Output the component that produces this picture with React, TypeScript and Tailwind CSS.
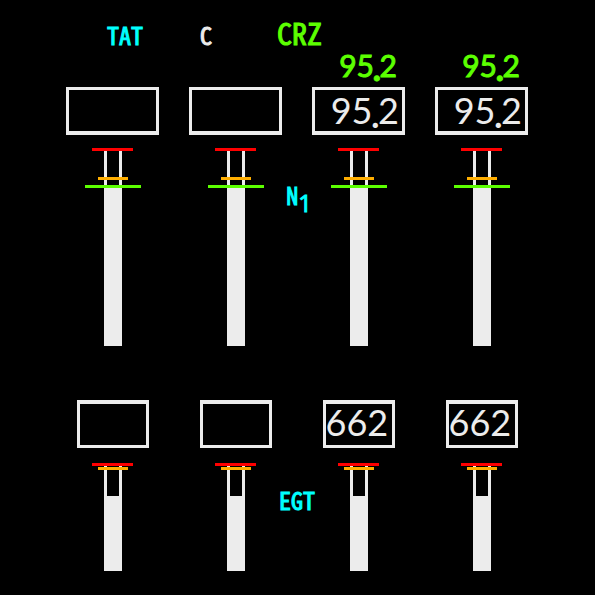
import React from "react";

type Engine = { id: number; n1: string; n1Ref: string; egt: string };

const engines: Engine[] = [
  { id: 1, n1: "", n1Ref: "", egt: "" },
  { id: 2, n1: "", n1Ref: "", egt: "" },
  { id: 3, n1: "95.2", n1Ref: "95.2", egt: "662" },
  { id: 4, n1: "95.2", n1Ref: "95.2", egt: "662" },
];

const label =
  "font-['Noto_Sans_Mono_CJK_SC','Noto_Sans_CJK_SC',monospace] font-normal whitespace-nowrap [-webkit-text-stroke:1px_currentColor]";

function Decimal({ value }: { value: string }) {
  const [whole, fraction] = value.split(".");
  if (!fraction) return <>{whole}</>;
  return (
    <>
      {whole}
      <span className="-mx-px align-[-4px] text-[32px] leading-none font-black">.</span>
      {fraction}
    </>
  );
}

function N1Column({ engine }: { engine: Engine }) {
  return (
    <div className="flex flex-col items-center">
      <div className="flex h-9 w-[93px] items-start justify-end pr-2 text-[30px] leading-7 text-[#5cff00] [-webkit-text-stroke:1px_currentColor]">
        <span>
          <Decimal value={engine.n1Ref} />
        </span>
      </div>
      <div className="flex h-12 w-[93px] items-center justify-end border-3 border-b-4 border-[#ececec] pr-[3px] text-4xl leading-10">
        <span>
          <Decimal value={engine.n1} />
        </span>
      </div>
      <div className="mt-[13px] flex w-full flex-col items-center">
        <div className="h-[3px] w-[41px] bg-[#ff0000]" />
        <div className="relative h-[195px] w-[18px] border-x-3 border-[#ececec] pt-[34px]">
          <div className="h-full bg-[#ececec]" />
          <div className="absolute top-[26px] -left-[9px] h-[3px] w-[30px] bg-[#ffae00]" />
          <div className="absolute top-[34px] -left-[22px] h-[3px] w-14 bg-[#5cff00]" />
        </div>
      </div>
    </div>
  );
}

function EgtColumn({ engine }: { engine: Engine }) {
  return (
    <div className="flex flex-col items-center">
      <div className="flex h-12 w-[72px] items-start border-3 border-t-4 border-[#ececec] text-4xl leading-9">
        {engine.egt}
      </div>
      <div className="mt-[15px] flex w-full flex-col items-center">
        <div className="h-[3px] w-[41px] bg-[#ff0000]" />
        <div className="relative h-[105px] w-[18px] border-x-3 border-[#ececec] pt-[30px]">
          <div className="h-full bg-[#ececec]" />
          <div className="absolute top-px -left-[9px] h-[3px] w-[30px] bg-[#ffae00]" />
        </div>
      </div>
    </div>
  );
}

export default function App() {
  return (
    <main className="min-h-screen bg-black pt-4 pr-[52px] pb-6 pl-[51px] font-['Lato',sans-serif] text-[#ececec]">
      <header className={`flex h-[35px] items-baseline pl-14 text-2xl leading-8 ${label}`}>
        <span className="text-[#00ffff]">TAT</span>
        <span className="ml-[57px]">C</span>
        <span className="ml-[65px] text-[30px] leading-8 text-[#5cff00]">CRZ</span>
      </header>

      <section aria-label="N1" className="grid grid-cols-4">
        <div className="col-span-4 col-start-1 row-start-1 grid grid-cols-4">
          {engines.map((e) => (
            <N1Column key={e.id} engine={e} />
          ))}
        </div>
        <h2 className={`col-span-2 col-start-2 row-start-1 mt-32 flex justify-self-center self-start pl-1 text-2xl leading-8 text-[#00ffff] ${label}`}>
          <span>N</span>
          <span className="pt-2 font-['Open_Sans',sans-serif]">1</span>
        </h2>
      </section>

      <section aria-label="EGT" className="mt-[54px] grid grid-cols-4">
        <div className="col-span-4 col-start-1 row-start-1 grid grid-cols-4">
          {engines.map((e) => (
            <EgtColumn key={e.id} engine={e} />
          ))}
        </div>
        <h2 className={`col-span-2 col-start-2 row-start-1 mt-[84px] justify-self-center self-start text-2xl leading-8 text-[#00ffff] ${label}`}>
          EGT
        </h2>
      </section>
    </main>
  );
}
